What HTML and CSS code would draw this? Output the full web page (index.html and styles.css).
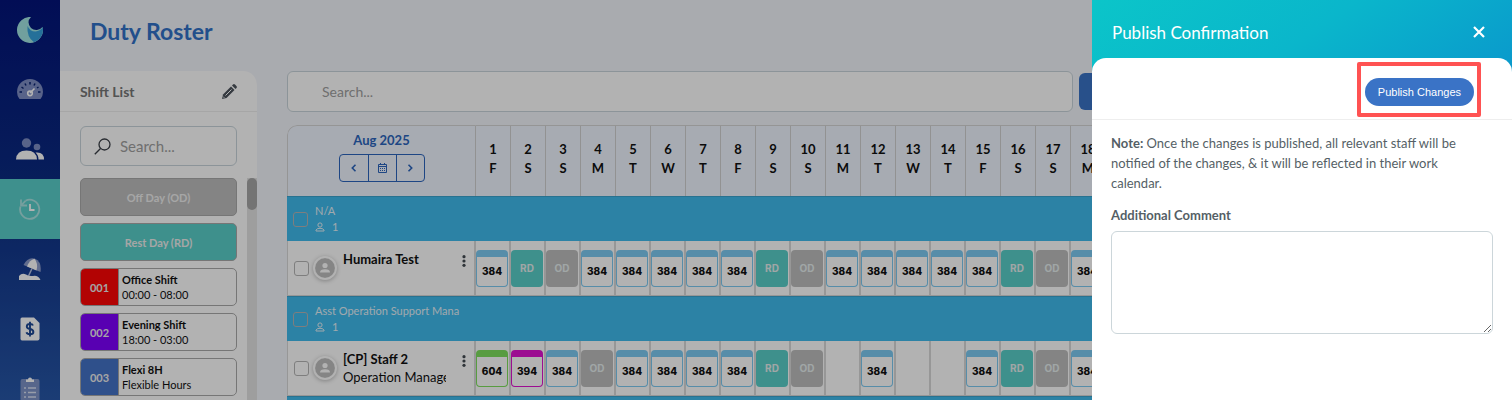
FILE: index.html
```html
<!DOCTYPE html>
<html lang="en">
<head>
    <meta charset="UTF-8">
    <meta name="viewport" content="width=device-width, initial-scale=1.0">
    <title>Duty Roster</title>
    <link rel="stylesheet" href="styles.css">
</head>
<body>
    <svg class="sprite" aria-hidden="true">
        <symbol id="user" viewBox="0 0 10 10">
            <circle cx="5" cy="3" r="2.1" fill="none" stroke="currentColor"/>
            <path d="M1 9V8.200Q1.500 6.300 5 6.300T9 8.200V9Z" fill="none" stroke="currentColor"/>
        </symbol>
        <symbol id="avatar" viewBox="0 0 20 20">
            <circle cx="10" cy="10" r="10" fill="#bfbfbf"/>
            <circle cx="10" cy="7.500" r="2.600" fill="#fff"/>
            <path d="M5 14.500Q5 11.200 10 11.200T15 14.500Z" fill="#fff"/>
        </symbol>
        <symbol id="kebab" viewBox="0 0 4 12">
            <circle cx="2" cy="1.700" r="1.600"/>
            <circle cx="2" cy="6" r="1.600"/>
            <circle cx="2" cy="10.300" r="1.600"/>
        </symbol>
    </svg>

    <div class="app">
        <nav class="sidebar">
            <a class="logo" href="#" aria-label="Home">
                <svg width="26" height="26" viewBox="0 0 26 26">
                    <path d="M14 0A13 13 0 1 0 26 13Q26 11.500 25.500 10A8 8 0 0 1 14 11Q9 5 14 0Z" fill="#a2e6e2"/>
                    <path d="M10.500 9Q13 14.500 18.500 14.500Q23 14 25.800 10.200Q26 12 26 13A13 13 0 0 1 17 25.300Q9.500 20 10.500 9Z" fill="#36a1dc"/>
                </svg>
            </a>
            <a class="nav-item" href="#" aria-label="Dashboard">
                <svg width="26" height="20" viewBox="0 0 26 20">
                    <path d="M2.500 20Q0 17 0 13A13 13 0 0 1 26 13Q26 17 23.500 20Z" fill="#7f8ec4"/>
                    <g stroke="#06206f" stroke-width="1.500">
                        <path d="M13 3V5.500M8 4.500l1 2M4.500 8l2 1.500M2.500 13H5M18 4.500l-1 2M23.500 13H21M21.500 8l-1.500 1"/>
                    </g>
                    <path d="M13 14L17.500 9.500" stroke="#fff" stroke-width="1.600"/>
                    <circle cx="13" cy="14.300" r="2.300" fill="none" stroke="#fff" stroke-width="1.600"/>
                </svg>
            </a>
            <a class="nav-item" href="#" aria-label="Staff">
                <svg width="28" height="22" viewBox="0 0 28 22">
                    <circle cx="10.500" cy="5" r="4.700" fill="#7f8ec4"/>
                    <circle cx="21" cy="9" r="3.300" fill="#7f8ec4"/>
                    <path d="M0 21.500Q.5 12.500 10.500 12.500T21 21.500Z" fill="#fff"/>
                    <path d="M19.500 14.500Q28 13.500 28 21.500H22.500Q22.500 17 19.500 14.500Z" fill="#fff"/>
                </svg>
            </a>
            <a class="nav-item active" href="#" aria-label="Time">
                <svg width="22" height="22" viewBox="0 0 22 22" fill="none" stroke="#a9e4e2" stroke-width="1.800">
                    <path d="M1.500 8.500A9.600 9.600 0 1 0 6.500 2.700"/>
                    <path d="M2 1.500V7.500H8M2 7.500L6.500 2.800"/>
                    <path d="M11 6V12H15.500" stroke="#fff"/>
                </svg>
            </a>
            <a class="nav-item" href="#" aria-label="Leave">
                <svg width="22" height="22" viewBox="0 0 22 22">
                    <path d="M4.500 7Q9-1.500 16 .8Q23 4 21.500 14Z" fill="#8c9ccc"/>
                    <path d="M8 8.500Q10.500 2 15.500.7Q19.500 5.500 17.500 12.500Z" fill="#fff"/>
                    <path d="M13 10.500L9.500 18" stroke="#b8c3e2" stroke-width="1.500"/>
                    <path d="M0 22V18Q3 14.500 7 16.500Q10 18.500 14 18Q19 17 21.500 22Z" fill="#fff"/>
                </svg>
            </a>
            <a class="nav-item" href="#" aria-label="Payroll">
                <svg width="20" height="24" viewBox="0 0 20 24">
                    <path d="M2 .5H14L19.500 6V21.500Q19.500 23.500 17.500 23.500H2Q.5 23.500.5 21.500V2Q.5.5 2 .5Z" fill="#fff"/>
                    <path d="M13 8.500Q12.500 7 10 7Q6.800 7 6.800 9.400Q6.800 11.300 10 12Q13.400 12.700 13.400 14.900Q13.400 17.200 10 17.200Q7 17.200 6.500 15.200M10 4.800V19.400" fill="none" stroke="#1d4896" stroke-width="1.900"/>
                </svg>
            </a>
            <a class="nav-item" href="#" aria-label="Tasks">
                <svg width="20" height="24" viewBox="0 0 20 24">
                    <rect x=".5" y="2" width="19" height="22" rx="2" fill="#7d93c8"/>
                    <path d="M6 5V2.500H8Q8 .5 10 .5T12 2.500H14V5Z" fill="#fff"/>
                    <path d="M4 11H6M8 11H16M4 15.500H6M8 15.500H16M4 20H6M8 20H16" stroke="#d8e0f2" stroke-width="1.500"/>
                </svg>
            </a>
        </nav>

        <main class="main">
            <h1 class="title">Duty Roster</h1>
            <div class="content">
                <section class="shifts">
                    <header class="shifts-header">
                        <h2>Shift List</h2>
                        <button class="icon-button" aria-label="Edit shift list">
                            <svg width="15" height="15" viewBox="0 0 15 15" fill="#4c535c">
                                <path d="M0 15L1 10.500L9 2.500L12.500 6L4.500 14Z"/>
                                <path d="M10 1.500L11 .5Q12 -.3 13 .6L14.400 2Q15.300 3 14.500 4L13.500 5Z"/>
                                <path d="M3.500 11.500L9.500 5.500" stroke="#fff"/>
                                <path d="M1 12.500L2.500 14" stroke="#fff" stroke-width=".8"/>
                            </svg>
                        </button>
                    </header>
                    <div class="shift-search">
                        <svg width="17" height="17" viewBox="0 0 17 17" fill="none" stroke="#3a3f47" stroke-width="1.300">
                            <circle cx="10.500" cy="6.500" r="5.500"/>
                            <path d="M6.500 10.500L.8 16.200"/>
                        </svg>
                        <input type="text" placeholder="Search..." aria-label="Search shifts">
                    </div>
                    <div class="shift-body">
                        <div class="shift-list">
                            <button class="shift off">Off Day (OD)</button>
                            <button class="shift rest">Rest Day (RD)</button>
                            <button class="shift">
                                <span class="code red">001</span>
                                <span class="shift-info"><strong>Office Shift</strong>00:00 - 08:00</span>
                            </button>
                            <button class="shift">
                                <span class="code purple">002</span>
                                <span class="shift-info"><strong>Evening Shift</strong>18:00 - 03:00</span>
                            </button>
                            <button class="shift">
                                <span class="code blue">003</span>
                                <span class="shift-info"><strong>Flexi 8H</strong>Flexible Hours</span>
                            </button>
                        </div>
                        <div class="track"><div class="thumb"></div></div>
                    </div>
                </section>

                <section class="roster">
                    <div class="toolbar">
                        <input class="roster-search" type="text" placeholder="Search..." aria-label="Search staff">
                        <button class="filter" aria-label="Filter"></button>
                    </div>
                    <div class="table-wrap">
                        <table>
                            <thead>
                                <tr>
                                    <th class="month">
                                        <div>Aug 2025</div>
                                        <div class="pager">
                                            <button aria-label="Previous month">
                                                <svg width="6" height="8" viewBox="0 0 6 8"><path d="M4.500.8L1.300 4L4.500 7.200"/></svg>
                                            </button>
                                            <button aria-label="Pick month">
                                                <svg class="calendar" width="9" height="10" viewBox="0 0 9 10"><path d="M.5 1.500H8.500V9.500H.5ZM.5 3.500H8.500M2.500 0V2M6.500 0V2"/><path d="M2 5.500H7M2 7.500H7" stroke-dasharray="1 1"/></svg>
                                            </button>
                                            <button aria-label="Next month">
                                                <svg width="6" height="8" viewBox="0 0 6 8"><path d="M1.500.8L4.700 4L1.500 7.200"/></svg>
                                            </button>
                                        </div>
                                    </th>
                                    <th>1<br>F</th>
                                    <th>2<br>S</th>
                                    <th>3<br>S</th>
                                    <th>4<br>M</th>
                                    <th>5<br>T</th>
                                    <th>6<br>W</th>
                                    <th>7<br>T</th>
                                    <th>8<br>F</th>
                                    <th>9<br>S</th>
                                    <th>10<br>S</th>
                                    <th>11<br>M</th>
                                    <th>12<br>T</th>
                                    <th>13<br>W</th>
                                    <th>14<br>T</th>
                                    <th>15<br>F</th>
                                    <th>16<br>S</th>
                                    <th>17<br>S</th>
                                    <th>18<br>M</th>
                                </tr>
                            </thead>
                            <tbody>
                                <tr class="group">
                                    <td colspan="19">
                                        <div class="group-cell">
                                            <input type="checkbox" aria-label="Select N/A">
                                            <div>
                                                <div>N/A</div>
                                                <div class="count"><svg width="10" height="10"><use href="#user"/></svg>1</div>
                                            </div>
                                        </div>
                                    </td>
                                </tr>
                                <tr class="staff">
                                    <td>
                                        <div class="staff-cell">
                                            <input type="checkbox" aria-label="Select Humaira Test">
                                            <svg class="avatar" width="20" height="20"><use href="#avatar"/></svg>
                                            <div class="name"><strong>Humaira Test</strong></div>
                                            <button class="icon-button kebab" aria-label="More"><svg width="4" height="12"><use href="#kebab"/></svg></button>
                                        </div>
                                    </td>
                                    <td><div class="chip">384</div></td>
                                    <td><div class="chip rest">RD</div></td>
                                    <td><div class="chip off">OD</div></td>
                                    <td><div class="chip">384</div></td>
                                    <td><div class="chip">384</div></td>
                                    <td><div class="chip">384</div></td>
                                    <td><div class="chip">384</div></td>
                                    <td><div class="chip">384</div></td>
                                    <td><div class="chip rest">RD</div></td>
                                    <td><div class="chip off">OD</div></td>
                                    <td><div class="chip">384</div></td>
                                    <td><div class="chip">384</div></td>
                                    <td><div class="chip">384</div></td>
                                    <td><div class="chip">384</div></td>
                                    <td><div class="chip">384</div></td>
                                    <td><div class="chip rest">RD</div></td>
                                    <td><div class="chip off">OD</div></td>
                                    <td><div class="chip">384</div></td>
                                </tr>
                                <tr class="group">
                                    <td colspan="19">
                                        <div class="group-cell">
                                            <input type="checkbox" aria-label="Select Asst Operation Support Mana">
                                            <div>
                                                <div>Asst Operation Support Mana</div>
                                                <div class="count"><svg width="10" height="10"><use href="#user"/></svg>1</div>
                                            </div>
                                        </div>
                                    </td>
                                </tr>
                                <tr class="staff">
                                    <td>
                                        <div class="staff-cell">
                                            <input type="checkbox" aria-label="Select [CP] Staff 2">
                                            <svg class="avatar" width="20" height="20"><use href="#avatar"/></svg>
                                            <div class="name"><strong>[CP] Staff 2</strong><br>Operation Manager</div>
                                            <button class="icon-button kebab" aria-label="More"><svg width="4" height="12"><use href="#kebab"/></svg></button>
                                        </div>
                                    </td>
                                    <td><div class="chip green">604</div></td>
                                    <td><div class="chip magenta">394</div></td>
                                    <td><div class="chip">384</div></td>
                                    <td><div class="chip off">OD</div></td>
                                    <td><div class="chip">384</div></td>
                                    <td><div class="chip">384</div></td>
                                    <td><div class="chip">384</div></td>
                                    <td><div class="chip">384</div></td>
                                    <td><div class="chip rest">RD</div></td>
                                    <td><div class="chip off">OD</div></td>
                                    <td></td>
                                    <td><div class="chip">384</div></td>
                                    <td></td>
                                    <td></td>
                                    <td><div class="chip">384</div></td>
                                    <td><div class="chip rest">RD</div></td>
                                    <td><div class="chip off">OD</div></td>
                                    <td><div class="chip">384</div></td>
                                </tr>
                                <tr class="group"><td colspan="19"></td></tr>
                            </tbody>
                        </table>
                    </div>
                </section>
            </div>
        </main>
    </div>

    <div class="backdrop"></div>

    <aside class="drawer">
        <header class="drawer-header">
            <h2>Publish Confirmation</h2>
            <button class="icon-button" aria-label="Close">
                <svg width="12" height="12" viewBox="0 0 12 12"><path d="M1 1L11 11M11 1L1 11" stroke="#fff" stroke-width="2.200"/></svg>
            </button>
        </header>
        <div class="drawer-body">
            <div class="drawer-actions">
                <div class="highlight"><button class="publish">Publish Changes</button></div>
            </div>
            <div class="drawer-form">
                <p><b>Note:</b> Once the changes is published, all relevant staff will be notified of the changes, &amp; it will be reflected in their work calendar.</p>
                <label for="comment">Additional Comment</label>
                <textarea id="comment"></textarea>
            </div>
        </div>
    </aside>
</body>
</html>
```

FILE: styles.css
```css
* {
    box-sizing: border-box;
}
body {
    margin: 0;
    height: 100vh;
    overflow: hidden;
    background-color: #f3f5fb;
    color: #111;
    font-family: Lato, 'Liberation Sans', sans-serif;
    font-size: 13px;
}
button, input, textarea {
    font-family: inherit;
}
h1, h2, p {
    margin: 0;
}
.sprite {
    display: none;
}
.icon-button {
    display: flex;
    padding: 0;
    border: none;
    background: none;
    cursor: pointer;
}
.app {
    display: flex;
    height: 100vh;
    overflow: hidden;
}

/* sidebar */
.sidebar {
    flex: 0 0 60px;
    overflow: hidden;
    background: linear-gradient(#03147a, #0b2b82 45%, #2757a8);
}
.logo, .nav-item {
    display: flex;
    align-items: center;
    justify-content: center;
    height: 60px;
}
.logo {
    height: 59px;
}
.nav-item.active {
    background-color: #5acfcb;
}

/* page */
.main {
    flex: 1;
    min-width: 0;
    display: flex;
    flex-direction: column;
}
.title {
    padding: 16px 30px 25px;
    color: #3271c8;
    font-size: 23px;
    line-height: 30px;
    font-weight: 700;
}
.content {
    flex: 1;
    display: flex;
    gap: 30px;
    min-height: 0;
    padding-right: 40px;
}

/* shift list */
.shifts {
    flex: 0 0 197px;
    display: flex;
    flex-direction: column;
    overflow: hidden;
    background-color: #fff;
    border-radius: 0 14px 0 0;
}
.shifts-header {
    display: flex;
    align-items: center;
    justify-content: space-between;
    height: 41px;
    padding: 0 20px;
    border-bottom: 1px solid #eee;
}
.shifts-header h2 {
    color: #777;
    font-size: 14px;
}
.shift-search {
    display: flex;
    align-items: center;
    gap: 9px;
    height: 40px;
    margin: 14px 20px 12px;
    padding: 0 13px;
    border: 1px solid #c9d5db;
    border-radius: 6px;
}
.shift-search svg {
    flex: none;
}
.shift-search input {
    width: 100%;
    min-width: 0;
    padding: 0;
    border: none;
    outline: none;
    background: none;
    font-size: 15px;
}
::placeholder {
    color: #a0a0a0;
}
.shift-body {
    flex: 1;
    display: flex;
    gap: 10px;
    min-height: 0;
    padding-left: 20px;
}
.shift-list {
    flex: 1;
    display: flex;
    flex-direction: column;
    gap: 7px;
}
.shift {
    flex: none;
    display: flex;
    align-items: center;
    height: 38px;
    padding: 0;
    overflow: hidden;
    background-color: #fff;
    border: 1px solid #aaa;
    border-radius: 5px;
    color: #111;
    font-size: 11px;
    line-height: 15px;
    text-align: left;
    cursor: pointer;
}
.shift.off, .shift.rest {
    justify-content: center;
    color: #eee;
    font-weight: 700;
}
.shift.off, .chip.off {
    background-color: #bebebe;
}
.shift.rest, .chip.rest {
    background-color: #5acfc9;
}
.code {
    display: flex;
    align-items: center;
    justify-content: center;
    align-self: stretch;
    width: 38px;
    border-right: 1px solid #aaa;
    color: #eee;
    font-weight: 700;
}
.red {
    background-color: #ff0505;
}
.purple {
    background-color: #7f00ff;
}
.blue {
    background-color: #4473c8;
}
.shift-info {
    padding-left: 3px;
}
.shift-info strong {
    display: block;
}
.track {
    width: 10px;
    background-color: #e3e3e3;
}
.thumb {
    height: 32px;
    border-radius: 5px;
    background-color: #a7a7a7;
}

/* roster */
.roster {
    flex: 1;
    min-width: 0;
}
.toolbar {
    display: grid;
    grid-template-columns: 2fr 1fr;
    gap: 6px;
    margin-bottom: 13px;
}
.roster-search {
    height: 41px;
    padding: 0 34px;
    background-color: #fff;
    border: 1px solid #c9d5db;
    border-radius: 6px;
    font-size: 14px;
}
.filter {
    height: 37px;
    margin-top: 2px;
    background-color: #3a73c6;
    border: none;
    border-radius: 6px;
}
.table-wrap {
    overflow: hidden;
    border-radius: 10px 0 0 0;
}
table {
    border-spacing: 0;
}
th, td {
    padding: 0;
}
th {
    width: 35px;
    height: 71px;
    padding-bottom: 4px;
    background-color: #eff5ff;
    border-top: 1px solid #d6d6d6;
    border-right: 1px solid #d2d2d2;
    font-size: 13px;
    line-height: 19px;
}
th.month {
    width: 189px;
    padding-bottom: 10px;
    border-left: 1px solid #d6d6d6;
    border-radius: 10px 0 0 0;
    color: #2c65bd;
}
.pager {
    display: flex;
    width: max-content;
    margin: 4px auto 0;
    border: 1px solid #2c65bd;
    border-radius: 4px;
}
.pager button {
    display: flex;
    align-items: center;
    justify-content: center;
    width: 28px;
    height: 26px;
    padding: 0;
    border: none;
    background: none;
}
.pager button + button {
    border-left: 1px solid #2c65bd;
}
.pager path {
    fill: none;
    stroke: #2c65bd;
    stroke-width: 1.6;
}
.pager .calendar path {
    stroke-width: 1;
}
input[type=checkbox] {
    appearance: none;
    flex: none;
    width: 15px;
    height: 15px;
    margin: 0;
    border: 1px solid #b5b5b5;
    border-radius: 3px;
}
.group td {
    height: 45px;
    background-color: #3fbaed;
    border-top: 1px solid #3aa4cf;
    color: #e6f2f8;
    font-size: 11px;
    line-height: 16px;
}
.group-cell {
    display: flex;
    align-items: center;
    gap: 7px;
    padding-left: 6px;
}
.count {
    display: flex;
    align-items: center;
    gap: 7px;
}
.staff td {
    height: 55px;
    background-color: #fff;
    border-bottom: 1px solid #d8d8d8;
    border-right: 2px solid #d8d8d8;
}
.staff td:first-child {
    border-left: 1px solid #d8d8d8;
}
.staff-cell {
    display: flex;
    align-items: center;
    gap: 6px;
    padding-left: 6px;
}
.avatar {
    flex: none;
    border-radius: 50%;
    box-shadow: 0 0 0 2px #fff, 0 1px 4px 2px #bbb;
}
.name {
    flex: none;
    width: 103px;
    height: 36px;
    margin-left: 2px;
    overflow: hidden;
    font-size: 13px;
    line-height: 18px;
    white-space: nowrap;
}
.kebab {
    align-self: flex-start;
    margin: 5px 0 0 10px;
    fill: #444b52;
}
.chip {
    display: flex;
    align-items: center;
    justify-content: center;
    width: 32px;
    height: 37px;
    margin-right: 1px;
    border: 1px solid #7dcaf2;
    border-top-width: 7px;
    border-radius: 4px;
    font-family: Inter, sans-serif;
    font-size: 10px;
    font-weight: 800;
}
.chip.rest, .chip.off {
    border: none;
    color: #e6eeee;
    font-weight: 700;
}
.chip.green {
    border-color: #7ee05e;
}
.chip.magenta {
    border-color: #e014d0;
}

/* dims the page behind the drawer */
.backdrop {
    position: fixed;
    inset: 0;
    background-color: rgba(0, 0, 0, 0.3);
}

/* drawer */
.drawer {
    position: fixed;
    top: 0;
    right: 0;
    bottom: 0;
    width: 420px;
    display: flex;
    flex-direction: column;
    color: #555f66;
    background: linear-gradient(145deg, #0bc5c9, #0ab6cb 50%, #0a98cc) top / 100% 78px no-repeat;
}
.drawer-header {
    display: flex;
    align-items: center;
    justify-content: space-between;
    height: 58px;
    padding: 6px 27px 0 20px;
}
.drawer-header h2 {
    color: #fff;
    font-size: 17px;
    font-weight: 400;
}
.drawer-body {
    flex: 1;
    background-color: #fff;
    border-radius: 14px 14px 0 0;
}
.drawer-actions {
    display: flex;
    justify-content: flex-end;
    padding: 20px 38px 13px;
    border-bottom: 1px solid #eee;
}
.highlight {
    position: relative;
}
.highlight::after {
    content: '';
    position: absolute;
    inset: -16px -7px -11px -8px;
    border: 4px solid #ff5252;
    border-radius: 2px;
    pointer-events: none;
}
.publish {
    display: block;
    height: 28px;
    padding: 0 13px;
    background-color: #3a73c6;
    border: none;
    border-radius: 14px;
    color: #fff;
    font-family: 'Liberation Sans', sans-serif;
    font-size: 11px;
    cursor: pointer;
}
.drawer-form {
    padding: 13px 19px;
    font-size: 13px;
    line-height: 20px;
}
.drawer-form p {
    padding-right: 24px;
}
.drawer-form label {
    display: block;
    margin: 12px 0 6px;
    font-weight: 700;
}
.drawer-form textarea {
    display: block;
    width: 100%;
    height: 103px;
    border: 1px solid #ccd6da;
    border-radius: 6px;
}
```
